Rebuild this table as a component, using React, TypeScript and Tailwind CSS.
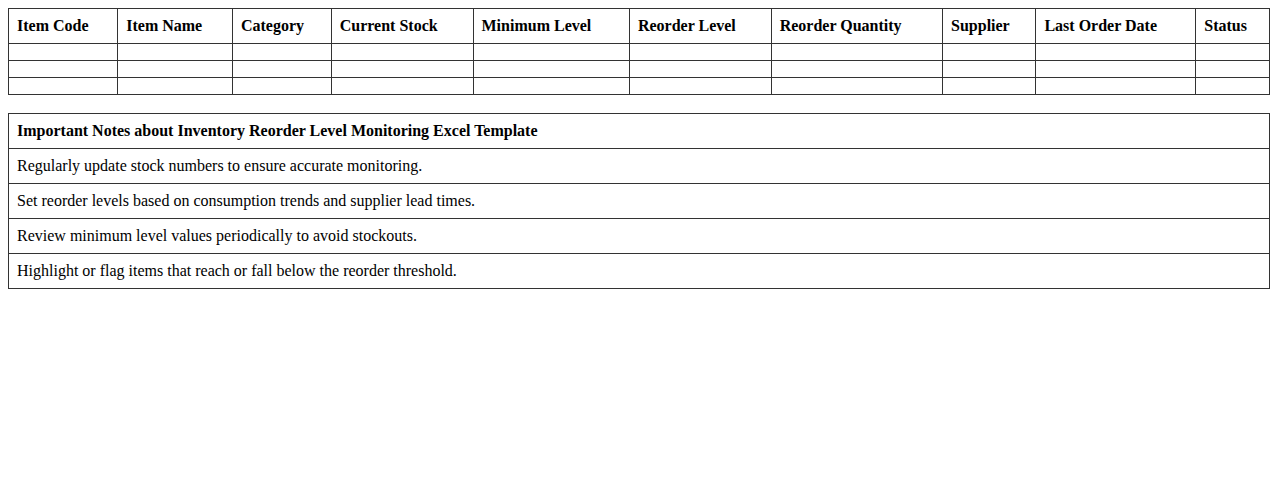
import React from "react";

const headers = [
  "Item Code",
  "Item Name",
  "Category",
  "Current Stock",
  "Minimum Level",
  "Reorder Level",
  "Reorder Quantity",
  "Supplier",
  "Last Order Date",
  "Status",
];

const notes = [
  "Regularly update stock numbers to ensure accurate monitoring.",
  "Set reorder levels based on consumption trends and supplier lead times.",
  "Review minimum level values periodically to avoid stockouts.",
  "Highlight or flag items that reach or fall below the reorder threshold.",
];

export default function App() {
  return (
    <div className="p-2 bg-white text-black text-[16px] leading-[18px] font-['Liberation_Serif','Times_New_Roman',serif]">
      {/* Inventory table */}
      <table className="w-full border-collapse">
        <thead>
          <tr>
            {headers.map((h) => (
              <th key={h} className="border border-[#333] p-2 text-left font-bold">
                {h}
              </th>
            ))}
          </tr>
        </thead>
        <tbody>
          {[0, 1, 2].map((r) => (
            <tr key={r}>
              {headers.map((h) => (
                <td key={h} className="border border-[#333] p-2"></td>
              ))}
            </tr>
          ))}
        </tbody>
      </table>

      {/* Notes */}
      <table className="w-full border-collapse mt-[18px]">
        <thead>
          <tr>
            <th className="border border-[#333] p-2 text-left font-bold">
              Important Notes about Inventory Reorder Level Monitoring Excel Template
            </th>
          </tr>
        </thead>
        <tbody>
          {notes.map((n) => (
            <tr key={n}>
              <td className="border border-[#333] p-2">{n}</td>
            </tr>
          ))}
        </tbody>
      </table>
    </div>
  );
}
